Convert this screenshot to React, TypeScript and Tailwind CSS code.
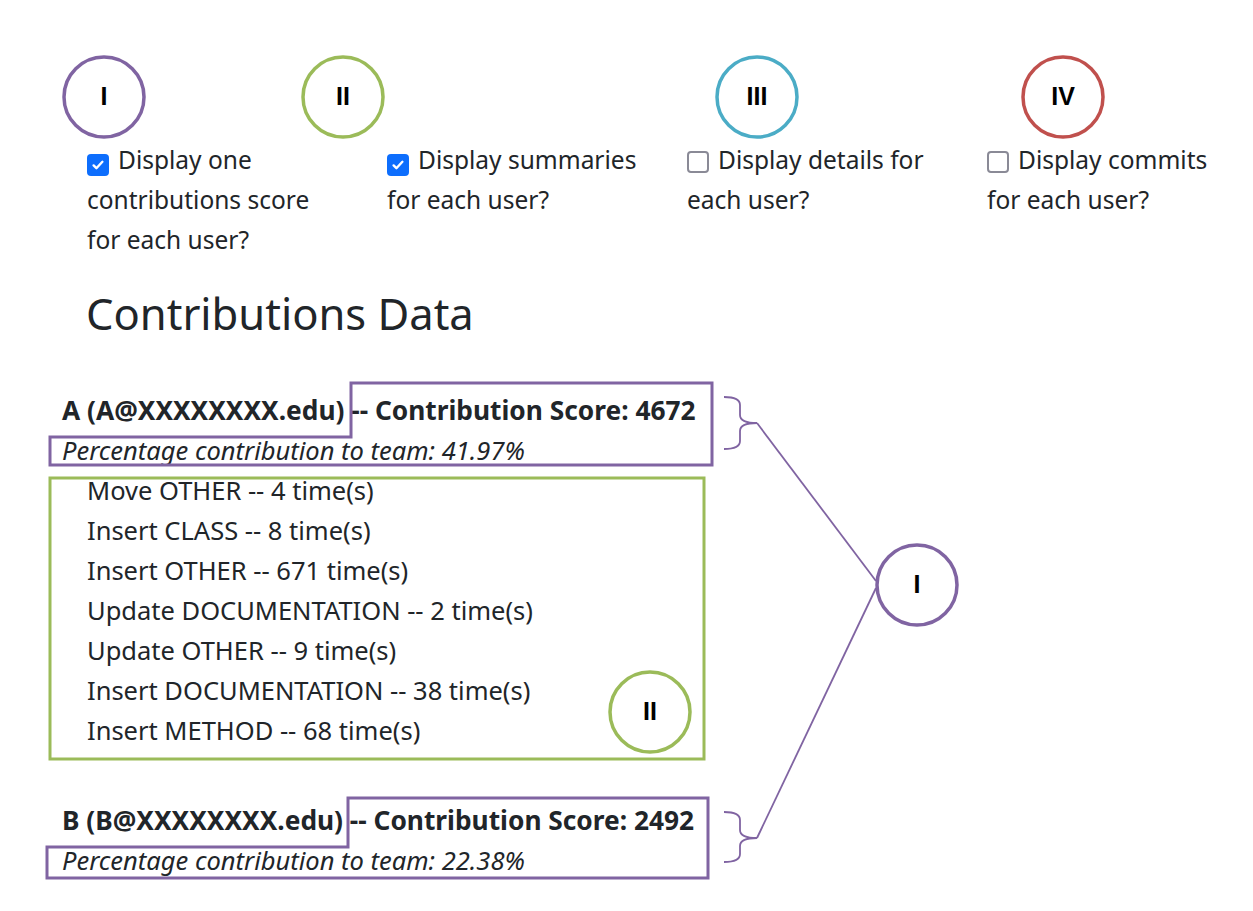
import React from 'react';

const textFont = { fontFamily: '"Noto Sans", "Open Sans", sans-serif' };

const Box = ({ checked }: { checked: boolean }) =>
  checked ? (
    <span className="inline-flex items-center justify-center w-[22px] h-[22px] rounded-[4px] bg-[#0d6efd] align-[-4px] mr-[9px]">
      <svg width="16" height="16" viewBox="0 0 20 20" fill="none">
        <path d="M4.5 10.5l3.5 3.5 7.5-8" stroke="white" strokeWidth="3" strokeLinecap="round" strokeLinejoin="round" />
      </svg>
    </span>
  ) : (
    <span className="inline-block w-[22px] h-[22px] rounded-[4px] border-2 border-[#8a8a96] bg-white align-[-4px] mr-[9px]" />
  );

const options = [
  { checked: true, lines: ['Display one', 'contributions score', 'for each user?'] },
  { checked: true, lines: ['Display summaries', 'for each user?'] },
  { checked: false, lines: ['Display details for', 'each user?'] },
  { checked: false, lines: ['Display commits', 'for each user?'] },
];

const actions = [
  'Move OTHER -- 4 time(s)',
  'Insert CLASS -- 8 time(s)',
  'Insert OTHER -- 671 time(s)',
  'Update DOCUMENTATION -- 2 time(s)',
  'Update OTHER -- 9 time(s)',
  'Insert DOCUMENTATION -- 38 time(s)',
  'Insert METHOD -- 68 time(s)',
];

const marks = [
  { x: 104, y: 97, color: '#8064A2', label: 'I' },
  { x: 343, y: 97, color: '#9BBB59', label: 'II' },
  { x: 757, y: 97, color: '#4BACC6', label: 'III' },
  { x: 1063, y: 97, color: '#C0504D', label: 'IV' },
  { x: 917, y: 585, color: '#8064A2', label: 'I' },
  { x: 650, y: 712, color: '#9BBB59', label: 'II' },
];

export default function App() {
  return (
    <div className="relative w-[1253px] h-[911px] bg-white text-[#212529] overflow-hidden" style={textFont}>
      {/* page content */}
      <div className="pt-[140px]">
        <div className="flex pl-[87px] text-[24.5px] leading-[40px]">
          {options.map((o, i) => (
            <div key={i} className="w-[300px] shrink-0">
              <Box checked={o.checked} />
              {o.lines.map((l, j) => (
                <React.Fragment key={j}>
                  {l}
                  {j < o.lines.length - 1 && <br />}
                </React.Fragment>
              ))}
            </div>
          ))}
        </div>

        <h2 className="mt-[29px] pl-[86px] text-[43.5px] leading-[48px] font-normal">Contributions Data</h2>

        <div className="mt-[53px] text-[25.5px] leading-[40px]">
          <p className="pl-[62px] font-bold text-[26.3px]">A (A@XXXXXXXX.edu) -- Contribution Score: 4672</p>
          <p className="pl-[62px] italic">Percentage contribution to team: 41.97%</p>
          <div className="pl-[87px]">
            {actions.map((a) => (
              <p key={a}>{a}</p>
            ))}
          </div>
          <p className="mt-[50px] pl-[62px] font-bold text-[26.3px]">B (B@XXXXXXXX.edu) -- Contribution Score: 2492</p>
          <p className="pl-[62px] italic">Percentage contribution to team: 22.38%</p>
        </div>
      </div>

      {/* annotations drawn on top of the screenshot */}
      <svg className="absolute inset-0 pointer-events-none" width="1253" height="911" fill="none">
        <path d="M351 383H712V465H50V437H351Z" stroke="#8064A2" strokeWidth="3" />
        <path d="M348 798H708V878H47V847H348Z" stroke="#8064A2" strokeWidth="3" />
        <rect x="50" y="478" width="654" height="281" stroke="#9BBB59" strokeWidth="3" />
        <path d="M724 397Q740 397 740 405V415Q740 423 757 423Q740 423 740 431V441Q740 449 724 449" stroke="#8064A2" strokeWidth="1.8" />
        <path d="M724 812Q740 812 740 820V830Q740 838 757 838Q740 838 740 846V854Q740 862 724 862" stroke="#8064A2" strokeWidth="1.8" />
        <path d="M757 423L876 581" stroke="#8064A2" strokeWidth="1.8" />
        <path d="M757 838L876 588" stroke="#8064A2" strokeWidth="1.8" />
        {marks.map((m, i) => (
          <circle key={i} cx={m.x} cy={m.y} r="40" stroke={m.color} strokeWidth="3.5" fill="white" />
        ))}
      </svg>
      {marks.map((m, i) => (
        <div
          key={i}
          className="absolute flex items-center justify-center w-[80px] h-[80px] -ml-[40px] -mt-[40px] text-[25px] font-black text-black"
          style={{ left: m.x, top: m.y, fontFamily: '"Liberation Sans", Arial, sans-serif' }}
        >
          {m.label}
        </div>
      ))}
    </div>
  );
}
